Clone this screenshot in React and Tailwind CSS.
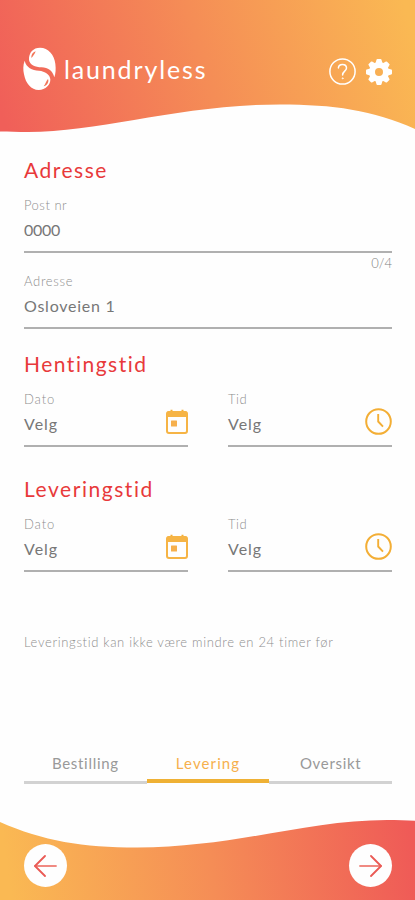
import React from 'react';

const Logo = () => (
  <svg className="w-[34px] h-[44px] shrink-0" viewBox="70 142 102 132" fill="none">
    <path
      d="M88 181C87 158 101 144 121 144C146 144 164 165 167 192C169 209 168 221 164 233C158 211 145 205 126 203C106 202 91 197 88 181Z"
      fill="white"
    />
    <path
      d="M75 183C70 195 70 211 73 224C78 252 95 271 117 271C138 271 153 255 152 239C151 224 136 215 118 213C97 211 80 204 75 183Z"
      fill="white"
    />
    <path d="M95 175C94 166 99 158 108 155C105 163 101 169 95 175Z" fill="#f27558" />
    <path d="M132 260C137 254 139 245 145 238C149 246 142 258 132 260Z" fill="#f27558" />
  </svg>
);

const HelpIcon = () => (
  <svg className="w-[27px] h-[27px]" viewBox="0 0 27 27" fill="none" stroke="white" strokeLinecap="round">
    <circle cx="13.5" cy="13.5" r="12.6" strokeWidth="1.5" />
    <path d="M9.4 9.900C9.600 7.600 11.200 6.400 13.400 6.400C15.800 6.400 17.500 7.900 17.500 10.100C17.500 13.200 13.600 13.200 13.600 17" strokeWidth="1.5" />
    <circle cx="13.6" cy="20.3" r="0.500" strokeWidth="0.8" />
  </svg>
);

const GearIcon = () => (
  <svg className="w-[26px] h-[26px]" viewBox="-13 -13 26 26">
    <circle r="7" fill="none" stroke="white" strokeWidth="6" />
    {[0, 45, 90, 135, 180, 225, 270, 315].map(angle => (
      <path
        key={angle}
        d="M-3.700 -8L-2.500 -12.300Q-2.300 -13 -1.600 -13H1.600Q2.300 -13 2.500 -12.300L3.700 -8Z"
        fill="white"
        transform={`rotate(${angle})`}
      />
    ))}
  </svg>
);

const CalendarIcon = () => (
  <svg className="w-[22px] h-[25px] mt-px" viewBox="0 0 22 25">
    <path d="M5.500 0.800V4M16.500 0.800V4" stroke="#f3ae35" strokeWidth="2" />
    <rect x="1" y="3" width="20" height="21" rx="2" fill="none" stroke="#f6b445" strokeWidth="2" />
    <path d="M0.500 4.500Q0.500 2.200 2.800 2.200H19.200Q21.500 2.200 21.500 4.500V8H0.500Z" fill="#f6b445" />
    <rect x="5" y="11.500" width="6" height="6" rx="0.500" fill="#f6b04d" />
  </svg>
);

const ClockIcon = () => (
  <svg className="w-[27px] h-[27px]" viewBox="0 0 27 27" fill="none" stroke="#f3ae35">
    <circle cx="13.5" cy="13.5" r="12.3" strokeWidth="2" />
    <path d="M13.2 6V13.500L18 18.600" strokeWidth="1.9" />
  </svg>
);

const Arrow = ({ flip }) => (
  <svg
    className={`w-[23px] h-[22px] ${flip ? 'rotate-180' : ''}`}
    viewBox="0 0 23 22"
    fill="none"
    strokeWidth="1.8"
    strokeLinecap="round"
    strokeLinejoin="round"
  >
    <path d="M22 11H1" stroke="#f08a82" />
    <path d="M11 1L1 11L11 21" stroke="#ea5a55" />
  </svg>
);

const Field = ({ label, value, icon, labelClass = '', valueClass = '' }) => (
  <div className="flex-1 h-[58px] border-b-2 border-[#b0b0b0]">
    <div className={`h-[20px] leading-[20px] text-[13px] font-light text-[#8e8e8e] ${labelClass}`}>
      <span>{label}</span>
    </div>
    <div className="h-[30px] flex justify-between items-start">
      <span className={`leading-[30px] text-[16px] text-[#777] ${valueClass}`}>{value}</span>
      {icon && <div className="-mt-px">{icon}</div>}
    </div>
  </div>
);

const Heading = ({ children, className }) => (
  <h2 className={`h-[30px] leading-[30px] text-[21px] text-[#e8393a] ${className}`}>
    <span>{children}</span>
  </h2>
);

const TimeRow = () => (
  <div className="flex gap-10">
    <Field
      label="Dato"
      value="Velg"
      labelClass="tracking-[0.9px]"
      valueClass="tracking-[1px]"
      icon={<CalendarIcon />}
    />
    <Field
      label="Tid"
      value="Velg"
      labelClass="tracking-[0.6px]"
      valueClass="tracking-[1px]"
      icon={<ClockIcon />}
    />
  </div>
);

const App = () => {
  const tabs = [
    { name: 'Bestilling', active: false, className: 'tracking-[0.7px]' },
    { name: 'Levering', active: true, className: 'tracking-[1.1px]' },
    { name: 'Oversikt', active: false, className: 'tracking-[0.7px]' },
  ];

  return (
    <div className="w-[415px] h-[900px] flex flex-col overflow-hidden bg-[#fefefe] font-['Lato','Open_Sans',sans-serif]">
      {/* Header */}
      <header className="relative h-[135px] shrink-0">
        <svg className="absolute inset-0 w-full h-full" viewBox="0 0 415 135">
          <defs>
            <linearGradient id="top" gradientUnits="userSpaceOnUse" x1="5" y1="125" x2="405" y2="5">
              <stop offset="0" stopColor="#f05f59" />
              <stop offset="0.5" stopColor="#f58d56" />
              <stop offset="1" stopColor="#fab953" />
            </linearGradient>
          </defs>
          <path d="M0 0H415V129C373 110 333 104.500 280 104.500C181 104.500 101 132 28 132C18 132 8 131.800 0 131.500Z" fill="url(#top)" />
        </svg>
        <div className="relative flex items-center justify-between h-[44px] mt-[47px] ml-[23px] mr-[23px]">
          <div className="flex items-center gap-[7px]">
            <Logo />
            <span className="text-[25px] leading-[30px] tracking-[1.85px] text-white">laundryless</span>
          </div>
          <div className="flex items-center gap-[10px] pt-[5px]">
            <HelpIcon />
            <GearIcon />
          </div>
        </div>
      </header>

      {/* Form */}
      <main className="flex-1 pl-[24px] pr-[23px] pt-[20px]">
        <Heading className="tracking-[1.5px]">Adresse</Heading>
        <div className="flex mt-[10px]">
          <Field label="Post nr" value="0000" labelClass="tracking-[0.5px]" valueClass="tracking-[-0.3px]" />
        </div>
        <div className="h-[18px] leading-[20px] text-right text-[13px] font-light text-[#808080]">0/4</div>
        <div className="flex">
          <Field label="Adresse" value="Osloveien 1" labelClass="tracking-[0.7px]" valueClass="tracking-[0.75px]" />
        </div>

        <Heading className="mt-[20px] mb-[10px] tracking-[1.5px]">Hentingstid</Heading>
        <TimeRow />

        <Heading className="mt-[27px] mb-[10px] tracking-[1.55px]">Leveringstid</Heading>
        <TimeRow />

        <p className="mt-[60px] leading-[20px] text-[13px] font-light tracking-[0.67px] text-[#8e8e8e] whitespace-nowrap">
          Leveringstid kan ikke være mindre en 24 timer før
        </p>
      </main>

      {/* Tabs */}
      <nav className="flex h-[35px] mx-[24px] mr-[23px] shrink-0">
        {tabs.map(tab => (
          <div
            key={tab.name}
            className={`flex-1 text-center text-[15px] leading-[28px] ${tab.className} ${
              tab.active
                ? 'h-[34px] border-b-4 border-[#efb135] text-[#f6b04d]'
                : 'h-[35px] border-b-[3px] border-[#d2d2d2] text-[#999]'
            }`}
          >
            {tab.name}
          </div>
        ))}
      </nav>

      {/* Footer */}
      <footer className="relative h-[85px] mt-[31px] shrink-0">
        <svg className="absolute inset-0 w-full h-full" viewBox="0 0 415 85">
          <defs>
            <linearGradient id="bottom" gradientUnits="userSpaceOnUse" x1="10" y1="75" x2="412" y2="20">
              <stop offset="0" stopColor="#fab953" />
              <stop offset="0.5" stopColor="#f58d56" />
              <stop offset="1" stopColor="#ef5a57" />
            </linearGradient>
          </defs>
          <path d="M0 7C43 26 83 32.500 137 32.500C234 32.500 307 5 387 5C397 5 407 5.200 415 5.700V85H0Z" fill="url(#bottom)" />
        </svg>
        <div className="relative flex justify-between pt-[29px] pl-[24px] pr-[23px]">
          <button className="w-[43px] h-[43px] rounded-full bg-[#fefefe] flex items-center justify-center">
            <Arrow />
          </button>
          <button className="w-[43px] h-[43px] rounded-full bg-[#fefefe] flex items-center justify-center">
            <Arrow flip />
          </button>
        </div>
      </footer>
    </div>
  );
};

export default App;
